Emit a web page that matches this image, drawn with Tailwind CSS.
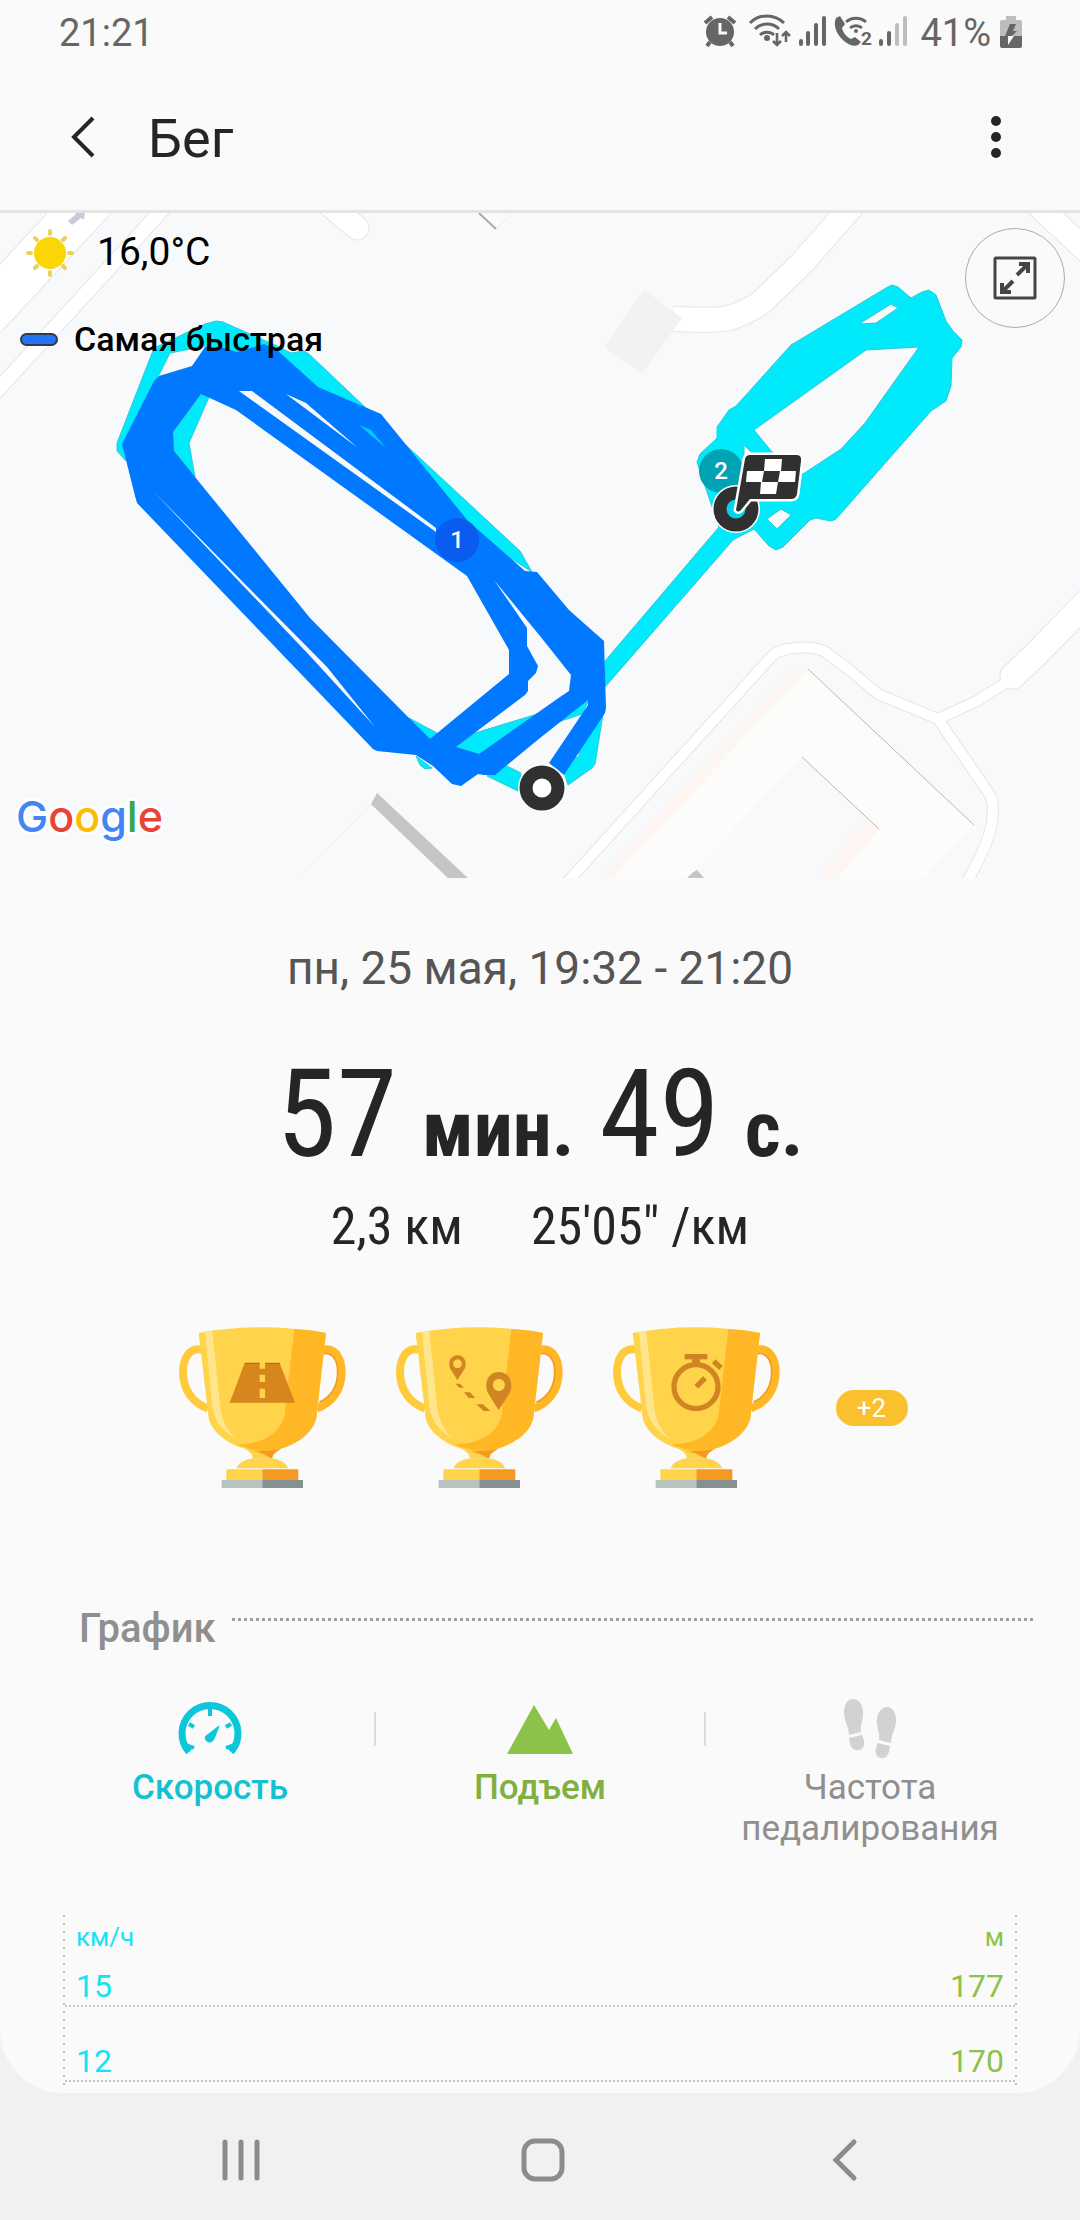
<!DOCTYPE html>
<html lang="ru">
<head>
  <meta charset="UTF-8" />
  <meta name="viewport" content="width=device-width, initial-scale=1.0"/>
  <title>Бег</title>
  <script src="https://cdn.jsdelivr.net/npm/@tailwindcss/browser@4"></script>
</head>
<body class="min-h-screen flex flex-col bg-[#f1f1f1] font-[Roboto,sans-serif] text-[#252525]">

  <main class="flex-1 bg-[#fafafa] rounded-b-[64px] overflow-hidden">

    <!-- Status bar -->
    <div class="h-16 pt-[2px] pl-[59px] pr-[58px] flex items-center justify-between text-[38px] leading-[44px] text-[#666]">
      <span>21:21</span>
      <div class="flex items-center">
        <svg class="w-[218px] h-[44px] mr-[5px]" viewBox="0 0 218 44" fill="#666" stroke="#666" stroke-width="0">
          <!-- alarm -->
          <circle cx="23" cy="21" r="14"/>
          <path d="M8 12l7-6M38 12l-7-6" stroke-width="4" fill="none"/>
          <path d="M13 31l-3 4M33 31l3 4" stroke-width="4" fill="none"/>
          <path d="M23 12v10h7" stroke="#fafafa" stroke-width="3" fill="none"/>
          <!-- wifi -->
          <path d="M53 12a24 24 0 0 1 34 0M58 18a17 17 0 0 1 24 0M63 24a10 10 0 0 1 14 0" stroke-width="3" fill="none"/>
          <circle cx="70" cy="27" r="3"/>
          <path d="M80 22v12M76 30l4 4 4-4M89 31V21M85 25l4-4 4 4" stroke-width="2.6" fill="none"/>
          <!-- signal 1 -->
          <path d="M104 30v3M111 22v11M119 14v19M127 7v26" stroke-width="4" stroke-linecap="round"/>
          <!-- wifi call -->
          <path d="M139 7l4-2 5 8-3 4c1 5 5 9 9 11l4-2 6 5-3 3c-4 2-9 0-14-4-8-7-11-16-8-23z"/>
          <path d="M149 11a15 15 0 0 1 20 0M153 17a9 9 0 0 1 12 0" stroke-width="3" fill="none"/>
          <circle cx="159" cy="20" r="2"/>
          <text x="164" y="34" font-size="19" font-weight="700">2</text>
          <!-- signal 2 -->
          <path d="M184 30v3M192 22v11" stroke-width="4" stroke-linecap="round"/>
          <path d="M200 14v19M208 7v26" stroke="#bdbdbd" stroke-width="4" stroke-linecap="round"/>
        </svg>
        <span>41%</span>
        <svg class="w-[22px] h-[44px] ml-[9px]" viewBox="0 0 22 44">
          <path d="M6 5h10v4h4q2 0 2 2v14H0V11q0-2 2-2h4z" fill="#bdbdbd"/>
          <path d="M0 25h22v10q0 2-2 2H2q-2 0-2-2z" fill="#666"/>
          <path d="M10 13h6l-3 7h4l-5 5H5z" fill="#666"/>
          <path d="M8 25h6l-6 9z" fill="#fafafa"/>
        </svg>
      </div>
    </div>

    <!-- Header -->
    <header class="h-[149px] px-[60px] flex items-center border-b-3 border-[#e4e4e4]">
      <button class="w-[48px] h-[48px] flex items-center justify-center" aria-label="Назад">
        <svg class="w-[26px] h-[42px]" viewBox="0 0 26 42" fill="none" stroke="#252525" stroke-width="4"><path d="M22 2L3 21l19 19"/></svg>
      </button>
      <h1 class="flex-1 pt-1 pl-[40px] text-[54px] leading-[64px]">Бег</h1>
      <button class="w-[48px] h-[48px] flex items-center justify-center" aria-label="Ещё">
        <svg class="w-[10px] h-[44px]" viewBox="0 0 10 44" fill="#252525"><circle cx="5" cy="6" r="5"/><circle cx="5" cy="22" r="5"/><circle cx="5" cy="38" r="5"/></svg>
      </button>
    </header>

    <!-- Map -->
    <section class="relative overflow-hidden">
      <svg class="w-full block bg-[#f8f9fb]" viewBox="0 0 1080 665">
        <!-- buildings -->
        <g>
          <path d="M371 591L299 666h150z" fill="#f9faf9" stroke="#eee"/>
          <path d="M377 580l92 86h-20l-78-75z" fill="#c5c5c5"/>
          <path d="M479 0l17 16L513 0z" fill="#fafbfa" stroke="#eee"/>
          <path d="M479 0l17 16" stroke="#aaa" stroke-width="2"/>
          <path d="M808 456l166 156-52 55H611z" fill="#fcfdfb"/>
          <path d="M795 452l13 4-197 211h-14z" fill="#fdf6f3"/>
          <path d="M802 544l77 72-43 51H705l-12-9z" fill="#f8f9fb"/>
          <path d="M865 605l14 11-43 51h-20z" fill="#fdf6f3"/>
          <path d="M808 456l166 156M802 544l77 72" stroke="#b8b8b4" fill="none"/>
          <path d="M697 657l8 9h-19l6-6z" fill="#c5c5c5"/>
        </g>
        <!-- roads: outline, then surface -->
        <g fill="none" stroke="#e3e5e8" stroke-linejoin="round">
          <path d="M95-17L-16 103" stroke-width="48"/>
          <path d="M174-16L-16 192" stroke-width="16"/>
          <path d="M325-12L357 15" stroke-width="25" stroke-linecap="round"/>
          <path d="M860-16L802 50 766 85q-12 12-37 20-12 3-56 1" stroke-width="26"/>
          <path d="M1033-12l60 56" stroke-width="25"/>
          <path d="M1090 386l-54 55-23 22" stroke-width="27" stroke-linecap="round"/>
          <path d="M1010 467l-33 21-39 18-60-25-31-26-19-14q-8-8-33-6-15 1-23 8L562 675M938 506l50 73q7 8 4 30t-28 65" stroke-width="12"/>
        </g>
        <g fill="none" stroke="#fff" stroke-linejoin="round">
          <path d="M95-17L-16 103" stroke-width="46"/>
          <path d="M174-16L-16 192" stroke-width="14"/>
          <path d="M325-12L357 15" stroke-width="23" stroke-linecap="round"/>
          <path d="M860-16L802 50 766 85q-12 12-37 20-12 3-56 1" stroke-width="24"/>
          <path d="M1033-12l60 56" stroke-width="23"/>
          <path d="M1090 386l-54 55-23 22" stroke-width="25" stroke-linecap="round"/>
          <path d="M1010 467l-33 21-39 18-60-25-31-26-19-14q-8-8-33-6-15 1-23 8L562 675M938 506l50 73q7 8 4 30t-28 65" stroke-width="10"/>
        </g>
        <path d="M644 77l38 28-40 56-38-27z" fill="#f1f2f4"/>
        <path d="M68 8l8-7-1-2h10l-1 8-3-2-9 7z" fill="#c8cbdd"/>
        <!-- slower track -->
        <g fill="#00eafc" stroke="#2fc9d8" stroke-width="1" fill-rule="evenodd">
          <path d="M126 248l-9-10v-8l37-95 51-24 11-3 7 1 54 24 14 7 13-2 5 3 57 54 154 143 12 21-92-59L277 150l-71-17-36 7-12 24-28 61z"/>
          <path d="M201 181l8 3-20 46 6 34-21-26-1-19z"/>
          <path d="M409 505l28 15-7 6zM416 543l4 9 5 4 7-1z"/>
          <path d="M456 534l19-14 115-35-8 16-42 14-61 26zM487 563l18-11 16 8-3 18z"/>
          <path d="M604 495l-9 56-3 4-24 17-4-13 9-13 6-3v-10z"/>
          <path d="M605 448L719 314l-14-41-8-24 3-8 17-16v-11l12-17 7-4 55-61 95-57 6-3 6 2 13 11 11-6 7-2 7 5 10 26 7 10 9 9-1 7-9 11-1 28-5 15-15 10-95 108-5 2-15-3-6 2-27 27-7 3-7-4-15-17-21 11-128 147zM754 217l18 22 31 22 38-25 24-26 54-76-53 3zM859 111l32-20 7 4-22 15zM767 306l14-10 10 6-14 14zM744 232v14l8-6z"/>
        </g>
        <!-- fastest track -->
        <path fill="#0078ff" fill-rule="evenodd" d="M205 134h15l17 5 27-8 13 6 41 37 63 27 26 32 61 75 57 50 12 1 32 38 35 31 2 67-1 5-41 62-15-12 39-58v-5l-48 38-45 37h-11l-6-1-17 12-9-2-19-18-17-11-39-4-4-2-236-246-2-7-13-52 32-63 5-5 33-10z
          M201 181l35 16 231 166 42 74v24l-79 65-21-21-99-100-115-141-21-26-1-19z
          M239 178h13l184 137v4z M286 181l20 9 52 45z
          M494 367l33 48v18l11 20-2 7-8 8v10l-3 4-69 52 23 7 81-57 9-6 2-16-31-39z
          M153 278L327 454l48 60-64-70z"/>
        <path d="M359 212l12 5 15 18z" fill="#00cdfc"/>
        <!-- kilometre marks -->
        <g font-size="24" font-weight="500" fill="#fff" text-anchor="middle">
          <circle cx="457" cy="327" r="22" fill="#0a5cf0"/>
          <text x="457" y="335">1</text>
          <circle cx="721" cy="258" r="22" fill="#00a3b4"/>
          <text x="721" y="266">2</text>
        </g>
        <!-- start -->
        <circle cx="542" cy="575" r="24" fill="#fff"/>
        <circle cx="542" cy="575" r="16" fill="#fff" stroke="#303030" stroke-width="13"/>
        <!-- finish -->
        <circle cx="736" cy="296" r="24" fill="#fff"/>
        <circle cx="736" cy="296" r="16" fill="#00d5ea" stroke="#303030" stroke-width="13"/>
        <path d="M745 246q1-4 5-4h46q6 0 5 6l-4 33q-1 5-6 5h-41l-9 11q-3 3-5 0z" fill="#303030" stroke="#fff" stroke-width="5" paint-order="stroke"/>
        <path d="M765 246h17l-1 12h-17zM747 258h17l-2 11h-16zM780 258h16l-1 11h-17zM761 269h17l-2 12h-16z" fill="#fff"/>
      </svg>

      <!-- Weather and legend -->
      <div class="absolute top-[17px] left-[20px] space-y-[43px] text-black">
        <div class="flex items-center gap-[17px] text-[39px] leading-[44px]">
          <svg class="w-[60px] h-[44px] overflow-visible" viewBox="0 0 60 44">
            <circle cx="30" cy="23" r="16" fill="#fbd504"/>
            <path d="M30 1v3M30 42v3M8 23h3M49 23h3M15 8l2 2M43 36l2 2M15 38l2-2M43 10l2-2" stroke="#ecd25a" stroke-width="4" stroke-linecap="round"/>
          </svg>
          <span>16,0°C</span>
        </div>
        <div class="flex items-center gap-[16px] text-[34px] leading-[44px] font-medium">
          <span class="w-[38px] h-[13px] rounded-full border-2 border-[#2d3a55] bg-[#2673f5]"></span>
          <span>Самая быстрая</span>
        </div>
      </div>
      <button class="absolute top-[15px] right-[15px] size-[100px] rounded-full border border-[#aaa] bg-[#fafafa] flex items-center justify-center" aria-label="Развернуть карту">
        <svg class="size-[44px]" viewBox="0 0 44 44" fill="none" stroke="#454545" stroke-width="3">
          <rect x="2" y="2" width="40" height="40" rx="1"/>
          <path d="M24 19L35 8M26 8h9v9M20 25L9 36M9 27v9h9" stroke-width="4"/>
        </svg>
      </button>
      <div class="absolute left-[16px] bottom-[35px] font-[Inter,sans-serif] text-[43px] leading-[54px] font-medium [paint-order:stroke] [-webkit-text-stroke:6px_white]"><span class="text-[#4285f4]">G</span><span class="text-[#ea4335]">o</span><span class="text-[#fbbc05]">o</span><span class="text-[#4285f4]">g</span><span class="text-[#34a853]">l</span><span class="text-[#ea4335]">e</span></div>
    </section>

    <!-- Summary -->
    <section class="flex flex-col items-center pt-[62px]">
      <p class="text-[46px] leading-[56px] text-[#555]">пн, 25 мая, 19:32 - 21:20</p>
      <p class="mt-[54px] flex items-baseline gap-[25px] leading-[130px] font-['Roboto_Condensed','Liberation_Sans_Narrow',sans-serif]">
        <span class="text-[122px]">57</span>
        <span class="text-[78px] font-bold">мин.</span>
        <span class="text-[122px]">49</span>
        <span class="text-[78px] font-bold">с.</span>
      </p>
      <p class="flex gap-[68px] text-[52px] leading-[64px] font-['Roboto_Condensed','Liberation_Sans_Narrow',sans-serif]">
        <span>2,3 км</span>
        <span>25'05" /км</span>
      </p>
    </section>

    <!-- Awards -->
    <svg class="hidden">
      <symbol id="cup" viewBox="50 75 510 495">
        <path d="M125 149C85 140 68 180 68 215c0 55 30 95 75 110" fill="none" stroke="#ffcb3d" stroke-width="24"/>
        <path d="M487 149c40-9 57 31 57 66 0 55-30 95-75 110" fill="none" stroke="#ffb726" stroke-width="24"/>
        <path d="M488 161c32-4 44 24 44 54 0 45-20 75-55 92" fill="none" stroke="#f39a20" stroke-width="5"/>
        <path d="M115 99Q300 65 497 99L470 335c0 60-60 95-105 110q-28 12-29 30h-58q-2-18-29-30C200 430 142 390 143 335z" fill="#ffd34a"/>
        <path d="M402 87q60 3 95 12L470 335c0 60-60 95-105 110q-20 8-58 8-30 0-77-20c100 0 145-53 145-108z" fill="#ffb726"/>
        <path d="M134 96l22-3 24 230q8 60 46 92-58-30-70-92z" fill="#ffe58c"/>
        <path d="M270 452q35 5 92-5-25 12-28 30-25-20-64-25z" fill="#f39a20"/>
        <path d="M278 475h58q35 5 48 30H228q12-25 50-30z" fill="#ffd34a"/>
        <path d="M198 508h108v32H198z" fill="#ffd34a"/>
        <path d="M306 508h108v32H306z" fill="#f49a22"/>
        <path d="M184 540h122v24H184z" fill="#b8c2bf"/>
        <path d="M306 540h122v24H306z" fill="#859190"/>
      </symbol>
    </svg>
    <section class="mt-[66px] flex items-center justify-center gap-[47px]">
      <svg class="w-[170px] h-[165px]" viewBox="50 75 510 495">
        <use href="#cup" x="50" y="75" width="510" height="495"/>
        <path d="M253 189h105l46 119H208z" fill="#d6861d"/>
        <path d="M253 190h105" stroke="#b56d14" stroke-width="4"/>
        <path d="M298 186h16v20h-16zM298 224h16v22h-16zM298 266h16v28h-16z" fill="#ffd34a"/>
      </svg>
      <svg class="w-[170px] h-[165px]" viewBox="50 75 510 495">
        <use href="#cup" x="50" y="75" width="510" height="495"/>
        <g fill="#d08522" fill-rule="evenodd">
          <path d="M240 240l-22-35c-15-52 60-52 45 0zM240 178a13 13 0 1 0 1 0z"/>
          <path d="M364 331l-34-55c-23-80 92-80 69 0zM364 237a18 18 0 1 0 1 0z"/>
          <path d="M234 251h14l12 12h-14zM260 277h18l16 17h-20zM297 313h20l22 20h-20z"/>
        </g>
      </svg>
      <svg class="w-[170px] h-[165px]" viewBox="50 75 510 495">
        <use href="#cup" x="50" y="75" width="510" height="495"/>
        <g fill="none" stroke="#d08522">
          <circle cx="305" cy="260" r="66" stroke-width="16"/>
          <path d="M271 170h68" stroke-width="16"/>
          <path d="M305 175v20" stroke-width="24"/>
          <path d="M358 184l22 20M306 260l26-26" stroke-width="16"/>
        </g>
      </svg>
      <button class="ml-[8px] mr-[-4px] w-[72px] h-9 rounded-full bg-[#fbc02d] text-white text-[26px] leading-9">+2</button>
    </section>

    <!-- Chart -->
    <section class="mt-[112px]">
      <div class="pl-[79px] pr-[47px] flex gap-4">
        <h2 class="text-[40px] leading-[54px] font-medium text-[#8f8f8f]">График</h2>
        <div class="flex-1 mt-[16px] h-[3px] bg-[repeating-linear-gradient(90deg,#a0a0a0_0_3px,transparent_3px_6px)]"></div>
      </div>

      <div class="mt-[39px] px-[45px] grid grid-cols-3 text-[35px] leading-[41px] text-center">
        <button class="flex flex-col items-center text-[#14c1d2] font-medium">
          <svg class="w-[66px] h-[64px]" viewBox="0 0 66 64" fill="none" stroke="#0cc6da">
            <path d="M12 57A28 28 0 1 1 54 57" stroke-width="7"/>
            <path d="M33 12v9M12 29l5 3M54 29l-5 3M9 50l8 3M57 50l-8 3" stroke-width="4"/>
            <path d="M42 31l-5 13c-3 6-11 2-8-3z" fill="#0cc6da"/>
          </svg>
          <span class="mt-2">Скорость</span>
        </button>
        <button class="relative flex flex-col items-center text-[#7fb041] font-medium">
          <i class="absolute left-[-1px] top-[17px] w-[2px] h-[34px] bg-[#dcdcdc]"></i>
          <i class="absolute right-[-1px] top-[17px] w-[2px] h-[34px] bg-[#dcdcdc]"></i>
          <svg class="w-[66px] h-[64px]" viewBox="0 0 66 64"><path d="M0 59L27 10l15 25 7-12 17 36z" fill="#8bc34a"/></svg>
          <span class="mt-2">Подъем</span>
        </button>
        <button class="flex flex-col items-center text-[#8f8f8f]">
          <svg class="w-[54px] h-[64px]" viewBox="0 0 54 64" fill="#d2d2d2">
            <path d="M10 4c7 0 11 8 10 17-1 8-3 10-2 16L6 40C6 31 0 24 1 15 2 8 5 4 10 4zM6 43l13-3c4 8 2 14-3 15-7 1-9-4-10-12z"/>
            <path d="M44 12c-7 0-11 8-10 17 1 8 3 10 2 16l12 3c0-9 6-16 5-25-1-7-4-11-9-11zM35 48l12 3c-1 8-3 13-9 12-6-1-7-8-3-15z"/>
          </svg>
          <span class="mt-2">Частота<br>педалирования</span>
        </button>
      </div>

      <div class="mt-[66px] mx-[63px] h-[176px] flex text-[32px] leading-[38px]">
        <div class="w-[2px] bg-[repeating-linear-gradient(#c0c0c0_0_2px,transparent_2px_8px)]"></div>
        <div class="flex-1">
          <div class="px-[11px] pt-[6px] flex justify-between text-[26px] leading-[32px]">
            <span class="text-[#14e3f5]">км/ч</span>
            <span class="text-[#8bc34a]">м</span>
          </div>
          <div class="mt-[8px] px-[11px] h-[46px] flex items-end justify-between border-b-2 border-dotted border-[#c4c4c4]">
            <span class="text-[#14e3f5]">15</span>
            <span class="text-[#8bc34a]">177</span>
          </div>
          <div class="px-[11px] h-[75px] flex items-end justify-between border-b-2 border-dotted border-[#c4c4c4]">
            <span class="text-[#14e3f5]">12</span>
            <span class="text-[#8bc34a]">170</span>
          </div>
        </div>
        <div class="w-[2px] bg-[repeating-linear-gradient(#c0c0c0_0_2px,transparent_2px_8px)]"></div>
      </div>
    </section>
  </main>

  <!-- Navigation bar -->
  <nav class="h-[127px] pt-[6px] pl-[211px] pr-[205px] flex items-center justify-between">
    <button class="w-[60px] flex justify-center" aria-label="Недавние">
      <svg class="w-[40px] h-[44px]" viewBox="0 0 40 44" stroke="#8c8c8c" stroke-width="5" stroke-linecap="round"><path d="M4 4v36M20 4v36M36 4v36"/></svg>
    </button>
    <button class="w-[60px] flex justify-center" aria-label="Домой">
      <svg class="w-[44px] h-[44px]" viewBox="0 0 44 44" fill="none" stroke="#8c8c8c" stroke-width="5"><rect x="3" y="3" width="38" height="38" rx="11"/></svg>
    </button>
    <button class="w-[60px] flex justify-center" aria-label="Назад">
      <svg class="w-[26px] h-[44px]" viewBox="0 0 26 44" fill="none" stroke="#8c8c8c" stroke-width="5" stroke-linecap="round"><path d="M22 4L4 22l18 18"/></svg>
    </button>
  </nav>

</body>
</html>
